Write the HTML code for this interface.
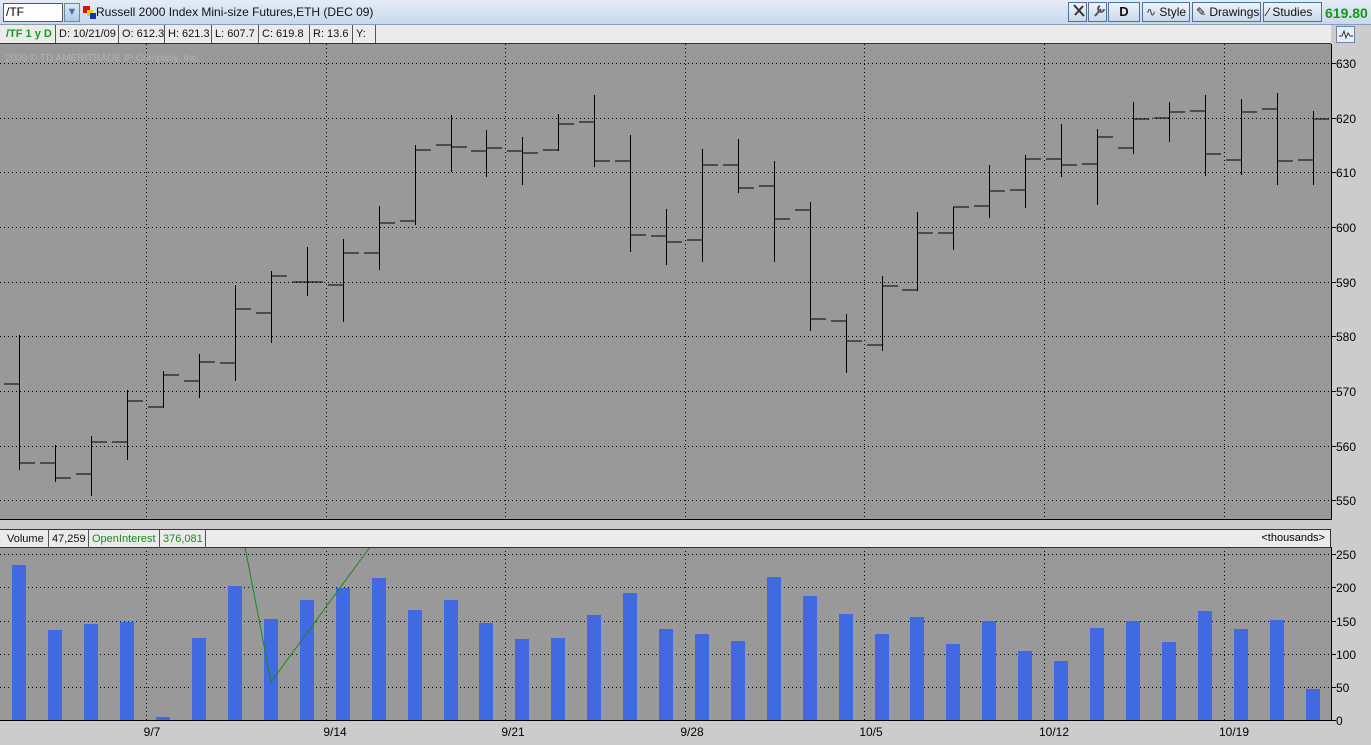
<!DOCTYPE html>
<html><head><meta charset="utf-8"><style>
*{margin:0;padding:0;box-sizing:border-box}
body{width:1371px;height:745px;overflow:hidden;background:#cccccc;font-family:"Liberation Sans",Arial,sans-serif;font-size:11px;position:relative}
.abs{position:absolute}
#tb{left:0;top:0;width:1371px;height:25px;background:linear-gradient(#e4ecf6,#c9d8ec);border-bottom:1px solid #8a9bb5}
.btn{position:absolute;top:2px;height:20px;border:1px solid #50709a;background:linear-gradient(#eef3fa,#cad8ea);font-size:12px;line-height:18px;color:#111;padding-left:3px;white-space:nowrap}
.cell{position:absolute;top:0;height:18px;border-right:1px solid #555;line-height:18px;padding-left:3px;white-space:nowrap;color:#111;font-size:11px}
</style></head><body>
<div id="tb" class="abs">
 <div class="abs" style="left:3px;top:3px;width:60px;height:19px;background:#fff;border:1px solid #556;font-size:12px;line-height:17px;padding-left:2px">/TF</div>
 <div class="abs" style="left:64px;top:3px;width:16px;height:19px;background:linear-gradient(#dde8f5,#b4c8e2);border:1px solid #6c86aa;color:#4a74b0;font-size:11px;text-align:center;line-height:16px">&#9660;</div>
 <div class="abs" style="left:83px;top:6px;width:7px;height:7px;background:#e01010"></div>
 <div class="abs" style="left:87px;top:10px;width:6px;height:6px;background:#e8d000"></div>
 <div class="abs" style="left:90px;top:13px;width:6px;height:6px;background:#1030c0"></div>
 <div class="abs" style="left:96px;top:5px;font-size:12px;color:#111">Russell 2000 Index Mini-size Futures,ETH (DEC 09)</div>
 <div class="btn" style="left:1068px;width:19px;"><svg width="14" height="16"><path d="M2 2L12 13M3 12L11 3" stroke="#333" stroke-width="2"/></svg></div>
 <div class="btn" style="left:1088px;width:19px;"><svg width="14" height="16"><path d="M3 13L9 6M8 3a3 3 0 1 0 4 3" stroke="#555" stroke-width="2" fill="none"/></svg></div>
 <div class="btn" style="left:1108px;width:32px;text-align:center;font-weight:bold;font-size:13px;padding:0">D</div>
 <div class="btn" style="left:1142px;width:48px;"><span style="color:#333">&#8767;</span> Style</div>
 <div class="btn" style="left:1192px;width:69px;">&#9998; Drawings</div>
 <div class="btn" style="left:1263px;width:59px;">&#8725; Studies</div>
 <div class="abs" style="left:1325px;top:5px;font-size:14px;font-weight:bold;color:#119911">619.80</div>
</div>
<div class="abs" style="left:0;top:25px;width:1331px;height:19px;background:#ebebeb;border-bottom:1px solid #333">
 <div class="cell" style="left:0;width:56px;color:#1a9a1a;font-weight:bold;padding-left:6px">/TF 1 y D</div>
 <div class="cell" style="left:56px;width:63px">D: 10/21/09</div>
 <div class="cell" style="left:119px;width:46px">O: 612.3</div>
 <div class="cell" style="left:165px;width:47px">H: 621.3</div>
 <div class="cell" style="left:212px;width:47px">L: 607.7</div>
 <div class="cell" style="left:259px;width:51px">C: 619.8</div>
 <div class="cell" style="left:310px;width:43px">R: 13.6</div>
 <div class="cell" style="left:353px;width:23px">Y:</div>
</div>
<div class="abs" style="left:1336px;top:26px;width:19px;height:17px;border:1px solid #6c86aa;background:#e6eef8"><svg width="17" height="15"><path d="M2 9L5 9L7 4L9 11L11 6L13 9L16 9" stroke="#333" fill="none"/></svg></div>

<svg class="abs" style="left:0;top:0" width="1371" height="745">
 <rect x="0" y="44" width="1331" height="475" fill="#999"/>
 <rect x="0" y="547" width="1331" height="173" fill="#999"/>
 <g stroke="#000" stroke-width="1" stroke-dasharray="1 3">
  <path d="M0 63.5H1331M0 118.5H1331M0 172.5H1331M0 227.5H1331M0 282.5H1331M0 336.5H1331M0 391.5H1331M0 446.5H1331M0 500.5H1331"/>
  <path d="M0 554.5H1331M0 587.5H1331M0 621.5H1331M0 654.5H1331M0 687.5H1331"/>
  <path d="M146.5 44V519M326.5 44V519M505.5 44V519M685.5 44V519M864.5 44V519M1044.5 44V519M1224.5 44V519"/>
  <path d="M146.5 547V720M326.5 547V720M505.5 547V720M685.5 547V720M864.5 547V720M1044.5 547V720M1224.5 547V720"/>
 </g>
 <text x="5" y="61" font-size="10" fill="#b0b0b0" font-family="Liberation Sans,sans-serif">2009 © TD AMERITRADE IP Company, Inc.</text>
 <path d="M1331.5 44V519.5H0M1331.5 547V720.5H0" stroke="#000" fill="none"/>
 <g stroke="#000"><path d="M1331 63.5h5M1331 118.5h5M1331 172.5h5M1331 227.5h5M1331 282.5h5M1331 336.5h5M1331 391.5h5M1331 446.5h5M1331 500.5h5M1331 554.5h5M1331 587.5h5M1331 621.5h5M1331 654.5h5M1331 687.5h5M1331 720.5h5"/></g>
 <g font-size="12" fill="#000" font-family="Liberation Sans,sans-serif">
  <text x="1336" y="68">630</text><text x="1336" y="123">620</text><text x="1336" y="177">610</text><text x="1336" y="232">600</text><text x="1336" y="287">590</text><text x="1336" y="341">580</text><text x="1336" y="396">570</text><text x="1336" y="451">560</text><text x="1336" y="505">550</text>
  <text x="1336" y="559">250</text><text x="1336" y="592">200</text><text x="1336" y="626">150</text><text x="1336" y="659">100</text><text x="1336" y="692">50</text><text x="1336" y="725">0</text>
  <g text-anchor="middle"><text x="152" y="736">9/7</text><text x="335" y="736">9/14</text><text x="513" y="736">9/21</text><text x="692" y="736">9/28</text><text x="871" y="736">10/5</text><text x="1054" y="736">10/12</text><text x="1234" y="736">10/19</text></g>
 </g>
 <g stroke="#000" stroke-width="1.3" fill="none" shape-rendering="crispEdges">
  <path d="M19.5 335V470M4 384H19M19 463H35"/>
  <path d="M55.5 445V482M40 463H55M55 478H71"/>
  <path d="M91.5 436V496M76 474H91M91 442H107"/>
  <path d="M127.5 390V460M112 442H127M127 401H143"/>
  <path d="M163.5 371V408M148 407H163M163 375H179"/>
  <path d="M199.5 354V398M184 381H199M199 362H215"/>
  <path d="M235.5 285V381M220 363H235M235 309H251"/>
  <path d="M271.5 271V343M256 313H271M271 276H287"/>
  <path d="M307.5 247V296M292 282H307M307 282H323"/>
  <path d="M343.5 239V322M328 285H343M343 253H359"/>
  <path d="M379.5 206V270M364 253H379M379 223H395"/>
  <path d="M415.5 145V225M400 221H415M415 150H431"/>
  <path d="M451.5 115V172M436 145H451M451 147H467"/>
  <path d="M486.5 130V177M471 151H486M486 148H502"/>
  <path d="M522.5 137V185M507 151H522M522 153H538"/>
  <path d="M558.5 114V151M543 150H558M558 124H574"/>
  <path d="M594.5 95V167M579 122H594M594 161H610"/>
  <path d="M630.5 135V252M615 161H630M630 235H646"/>
  <path d="M666.5 209V265M651 236H666M666 242H682"/>
  <path d="M702.5 149V262M687 240H702M702 165H718"/>
  <path d="M738.5 139V193M723 165H738M738 188H754"/>
  <path d="M774.5 161V262M759 186H774M774 219H790"/>
  <path d="M810.5 202V331M795 210H810M810 319H826"/>
  <path d="M846.5 314V373M831 321H846M846 341H862"/>
  <path d="M882.5 276V351M867 345H882M882 286H898"/>
  <path d="M917.5 212V291M902 290H917M917 233H933"/>
  <path d="M953.5 207V250M938 233H953M953 207H969"/>
  <path d="M989.5 165V218M974 206H989M989 191H1005"/>
  <path d="M1025.5 155V208M1010 190H1025M1025 159H1041"/>
  <path d="M1061.5 124V177M1046 159H1061M1061 165H1077"/>
  <path d="M1097.5 129V205M1082 164H1097M1097 137H1113"/>
  <path d="M1133.5 102V154M1118 148H1133M1133 119H1149"/>
  <path d="M1169.5 102V142M1154 118H1169M1169 112H1185"/>
  <path d="M1205.5 95V176M1190 111H1205M1205 154H1221"/>
  <path d="M1241.5 99V175M1226 160H1241M1241 112H1257"/>
  <path d="M1277.5 93V185M1262 109H1277M1277 161H1293"/>
  <path d="M1313.5 111V185M1298 160H1313M1313 119H1329"/>
 </g>
 <g fill="#4169e1">
  <rect x="12" y="565" width="14" height="155"/><rect x="48" y="630" width="14" height="90"/><rect x="84" y="624" width="14" height="96"/><rect x="120" y="622" width="14" height="98"/><rect x="156" y="717" width="14" height="3"/><rect x="192" y="638" width="14" height="82"/><rect x="228" y="586" width="14" height="134"/><rect x="264" y="619" width="14" height="101"/><rect x="300" y="600" width="14" height="120"/><rect x="336" y="588" width="14" height="132"/><rect x="372" y="578" width="14" height="142"/><rect x="408" y="610" width="14" height="110"/><rect x="444" y="600" width="14" height="120"/><rect x="479" y="623" width="14" height="97"/><rect x="515" y="639" width="14" height="81"/><rect x="551" y="638" width="14" height="82"/><rect x="587" y="615" width="14" height="105"/><rect x="623" y="593" width="14" height="127"/><rect x="659" y="629" width="14" height="91"/><rect x="695" y="634" width="14" height="86"/><rect x="731" y="641" width="14" height="79"/><rect x="767" y="577" width="14" height="143"/><rect x="803" y="596" width="14" height="124"/><rect x="839" y="614" width="14" height="106"/><rect x="875" y="634" width="14" height="86"/><rect x="910" y="617" width="14" height="103"/><rect x="946" y="644" width="14" height="76"/><rect x="982" y="621" width="14" height="99"/><rect x="1018" y="651" width="14" height="69"/><rect x="1054" y="661" width="14" height="59"/><rect x="1090" y="628" width="14" height="92"/><rect x="1126" y="621" width="14" height="99"/><rect x="1162" y="642" width="14" height="78"/><rect x="1198" y="611" width="14" height="109"/><rect x="1234" y="629" width="14" height="91"/><rect x="1270" y="620" width="14" height="100"/><rect x="1306" y="689" width="14" height="31"/>
 </g>
 <path d="M245 547L271 682L370 547" stroke="#1a8a1a" fill="none"/>
</svg>

<div class="abs" style="left:0;top:529px;width:1331px;height:19px;background:#ebebeb;border-top:1px solid #333;border-bottom:1px solid #333;border-right:1px solid #333">
 <div class="cell" style="left:0;width:49px;padding-left:7px">Volume</div>
 <div class="cell" style="left:49px;width:40px">47,259</div>
 <div class="cell" style="left:89px;width:71px;color:#1a8a1a">OpenInterest</div>
 <div class="cell" style="left:160px;width:46px;color:#1a8a1a">376,081</div>
 <div class="abs" style="right:5px;top:0;line-height:17px">&lt;thousands&gt;</div>
</div>
</body></html>
